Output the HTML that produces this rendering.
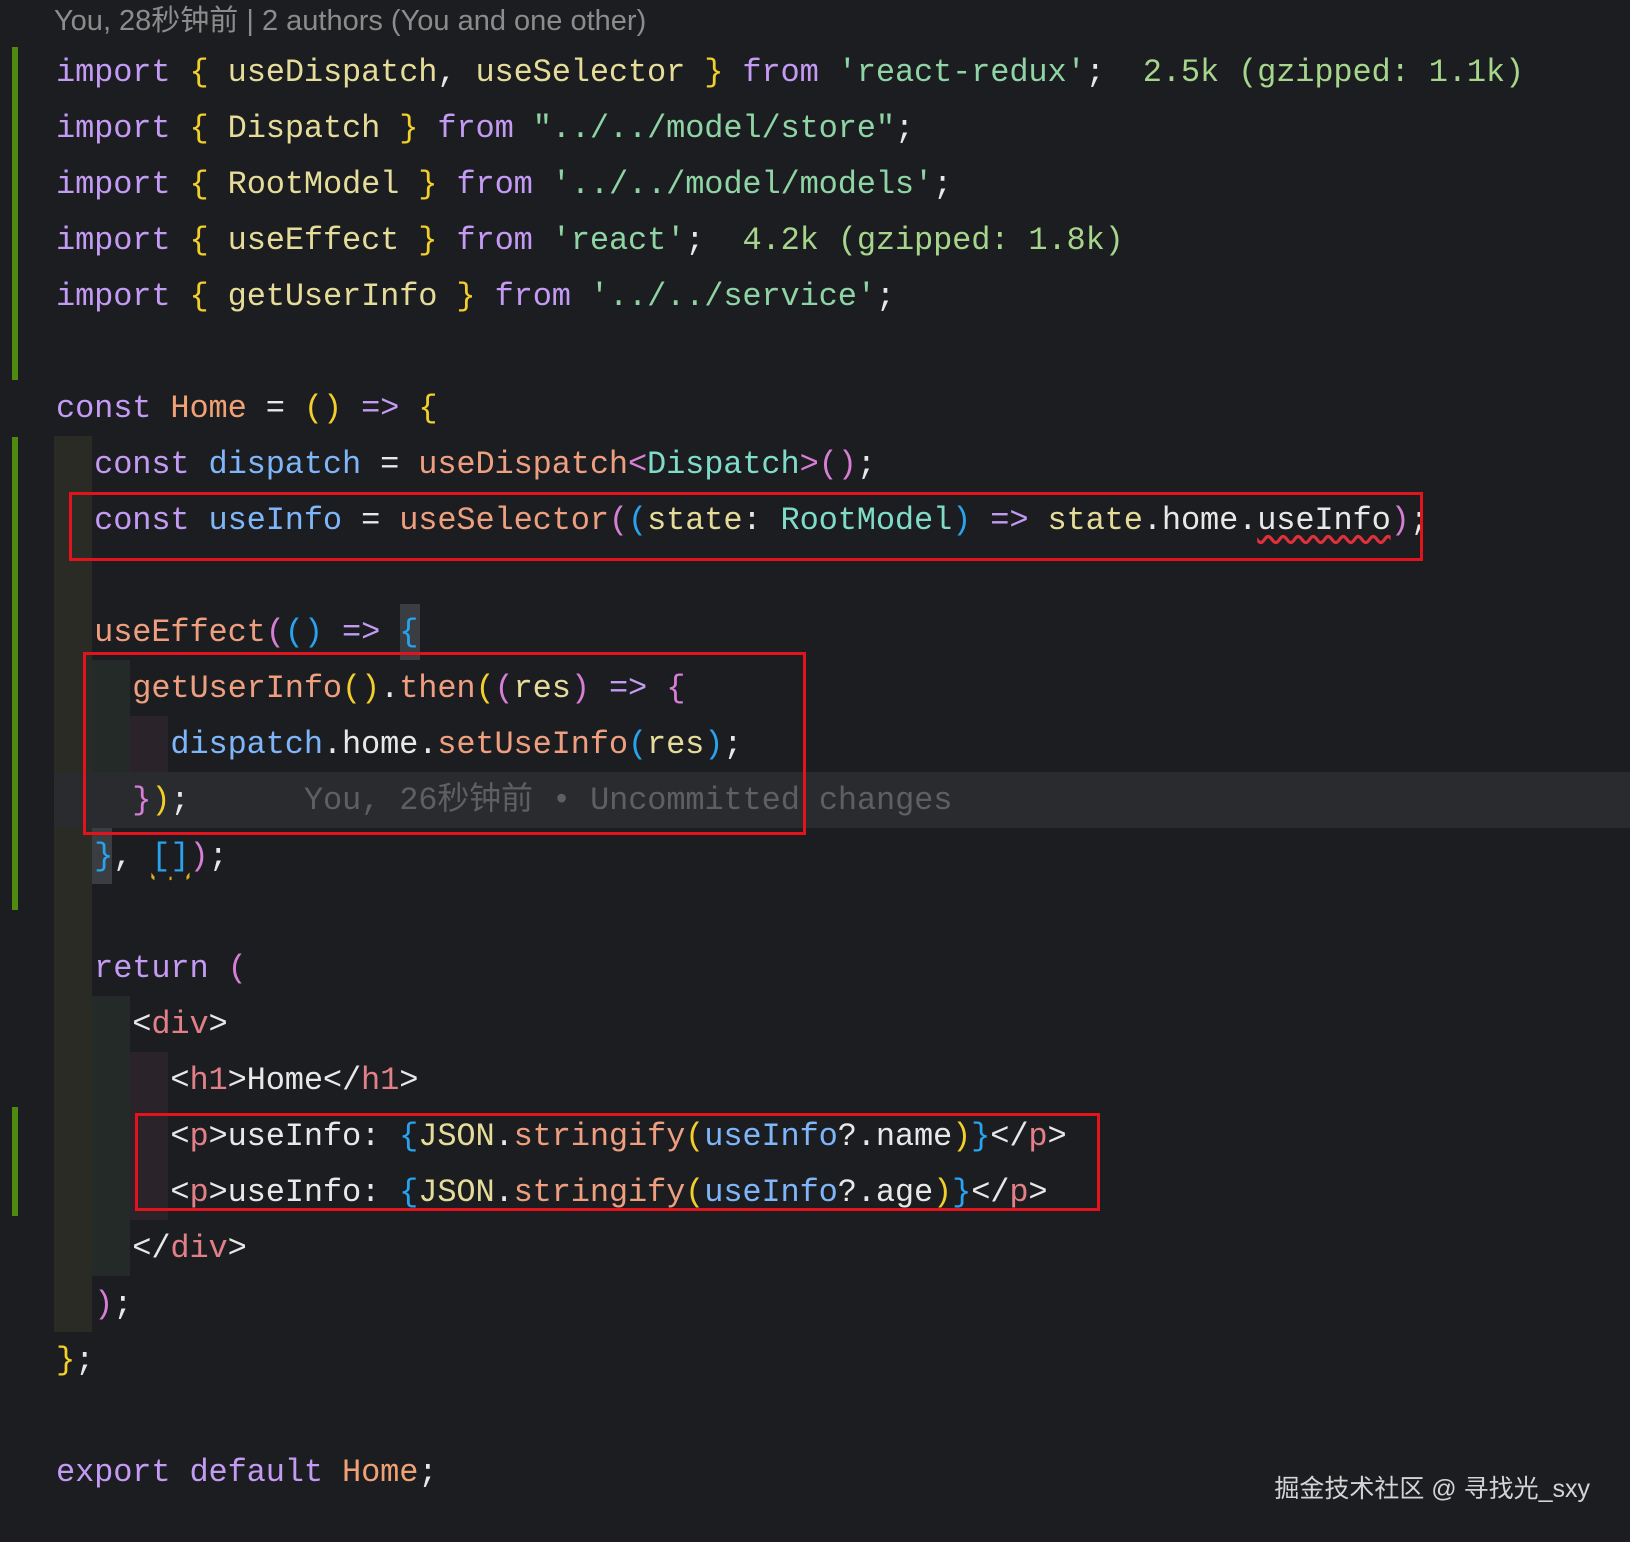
<!DOCTYPE html>
<html><head><meta charset="utf-8"><style>
body{margin:0;width:1630px;height:1542px;background:#1c1d20;overflow:hidden;position:relative;font-family:"Liberation Mono","Noto Sans CJK SC",monospace}
.l{position:absolute;left:56px;height:56px;line-height:58px;font-size:32px;letter-spacing:-0.14px;white-space:pre;color:#e8e8e8}
.r{position:absolute}
.k{color:#c49bf4}.y{color:#f2cf2b}.n{color:#e6dc9a}.s{color:#8fd4a4}.h{color:#a6d58c}.o{color:#f0a274}.f{color:#ee9f7f}.b{color:#7fb6fa}.t{color:#7fdcc8}.p{color:#d77ed7}.g{color:#e28088}.w{color:#e8e8e8}.c{color:#28a3f0}
.box{position:absolute;border:3px solid #e3131d;box-sizing:border-box}
</style></head><body>
<div class="r" style="left:54px;top:436px;width:38px;height:896px;background:#2a2b24"></div>
<div class="r" style="left:92px;top:660px;width:38px;height:168px;background:#232a27"></div>
<div class="r" style="left:92px;top:996px;width:38px;height:280px;background:#232a27"></div>
<div class="r" style="left:130px;top:716px;width:38px;height:56px;background:#2a2329"></div>
<div class="r" style="left:130px;top:1052px;width:38px;height:168px;background:#2a2329"></div>
<div class="r" style="left:54px;top:772px;width:1576px;height:56px;background:#2a2b2f"></div>
<div class="r" style="left:400px;top:604px;width:20px;height:56px;background:#3a3d42"></div>
<div class="r" style="left:92px;top:828px;width:20px;height:56px;background:#3a3d42"></div>
<div class="r" style="left:12px;top:47px;width:6px;height:333px;background:#4f8a10"></div>
<div class="r" style="left:12px;top:437px;width:6px;height:473px;background:#4f8a10"></div>
<div class="r" style="left:12px;top:1107px;width:6px;height:109px;background:#4f8a10"></div>
<div class="r" style="left:54px;top:3px;font:29px 'Liberation Sans','Noto Sans CJK SC',sans-serif;color:#8c8c8c;line-height:36px">You, 28秒钟前 | 2 authors (You and one other)</div>
<div class="l" style="top:44px"><span class="k">import</span> <span class="y">{</span> <span class="n">useDispatch</span>, <span class="n">useSelector</span> <span class="y">}</span> <span class="k">from</span> <span class="s">'react-redux'</span>;  <span class="h">2.5k (gzipped: 1.1k)</span></div>
<div class="l" style="top:100px"><span class="k">import</span> <span class="y">{</span> <span class="n">Dispatch</span> <span class="y">}</span> <span class="k">from</span> <span class="s">"../../model/store"</span>;</div>
<div class="l" style="top:156px"><span class="k">import</span> <span class="y">{</span> <span class="n">RootModel</span> <span class="y">}</span> <span class="k">from</span> <span class="s">'../../model/models'</span>;</div>
<div class="l" style="top:212px"><span class="k">import</span> <span class="y">{</span> <span class="n">useEffect</span> <span class="y">}</span> <span class="k">from</span> <span class="s">'react'</span>;  <span class="h">4.2k (gzipped: 1.8k)</span></div>
<div class="l" style="top:268px"><span class="k">import</span> <span class="y">{</span> <span class="n">getUserInfo</span> <span class="y">}</span> <span class="k">from</span> <span class="s">'../../service'</span>;</div>
<div class="l" style="top:380px"><span class="k">const</span> <span class="o">Home</span> = <span class="y">()</span> <span class="k">=&gt;</span> <span class="y">{</span></div>
<div class="l" style="top:436px">  <span class="k">const</span> <span class="b">dispatch</span> = <span class="f">useDispatch</span><span class="p">&lt;</span><span class="t">Dispatch</span><span class="p">&gt;()</span>;</div>
<div class="l" style="top:492px">  <span class="k">const</span> <span class="b">useInfo</span> = <span class="f">useSelector</span><span class="p">(</span><span class="c">(</span><span class="n">state</span>: <span class="t">RootModel</span><span class="c">)</span> <span class="k">=&gt;</span> <span class="n">state</span>.home.<span style="text-decoration:underline wavy #e0303a;text-underline-offset:6px">useInfo</span><span class="p">)</span>;</div>
<div class="l" style="top:604px">  <span class="f">useEffect</span><span class="p">(</span><span class="c">()</span> <span class="k">=&gt;</span> <span class="c">{</span></div>
<div class="l" style="top:660px">    <span class="f">getUserInfo</span><span class="y">()</span>.<span class="f">then</span><span class="y">(</span><span class="p">(</span><span class="n">res</span><span class="p">)</span> <span class="k">=&gt;</span> <span class="p">{</span></div>
<div class="l" style="top:716px">      <span class="b">dispatch</span>.home.<span class="f">setUseInfo</span><span class="c">(</span><span class="n">res</span><span class="c">)</span>;</div>
<div class="l" style="top:772px">    <span class="p">}</span><span class="y">)</span>;      <span style="color:#5d5f63">You, 26秒钟前 • Uncommitted changes</span></div>
<div class="l" style="top:828px">  <span class="c">}</span>, <span class="c" style="text-decoration:underline wavy #d8b020;text-underline-offset:6px">[]</span><span class="p">)</span>;</div>
<div class="l" style="top:940px">  <span class="k">return</span> <span class="p">(</span></div>
<div class="l" style="top:996px">    &lt;<span class="g">div</span>&gt;</div>
<div class="l" style="top:1052px">      &lt;<span class="g">h1</span>&gt;Home&lt;/<span class="g">h1</span>&gt;</div>
<div class="l" style="top:1108px">      &lt;<span class="g">p</span>&gt;useInfo: <span class="c">{</span><span class="n">JSON</span>.<span class="f">stringify</span><span class="y">(</span><span class="b">useInfo</span>?.name<span class="y">)</span><span class="c">}</span>&lt;/<span class="g">p</span>&gt;</div>
<div class="l" style="top:1164px">      &lt;<span class="g">p</span>&gt;useInfo: <span class="c">{</span><span class="n">JSON</span>.<span class="f">stringify</span><span class="y">(</span><span class="b">useInfo</span>?.age<span class="y">)</span><span class="c">}</span>&lt;/<span class="g">p</span>&gt;</div>
<div class="l" style="top:1220px">    &lt;/<span class="g">div</span>&gt;</div>
<div class="l" style="top:1276px">  <span class="p">)</span>;</div>
<div class="l" style="top:1332px"><span class="y">}</span>;</div>
<div class="l" style="top:1444px"><span class="k">export</span> <span class="k">default</span> <span class="o">Home</span>;</div>
<div class="box" style="left:69px;top:492px;width:1354px;height:69px"></div>
<div class="box" style="left:83px;top:652px;width:723px;height:183px"></div>
<div class="box" style="left:135px;top:1113px;width:965px;height:98px"></div>
<div class="r" style="right:40px;top:1472px;font:25px 'Liberation Sans','Noto Sans CJK SC',sans-serif;color:#d4d4d4;line-height:34px">掘金技术社区 @ 寻找光_sxy</div>
</body></html>
